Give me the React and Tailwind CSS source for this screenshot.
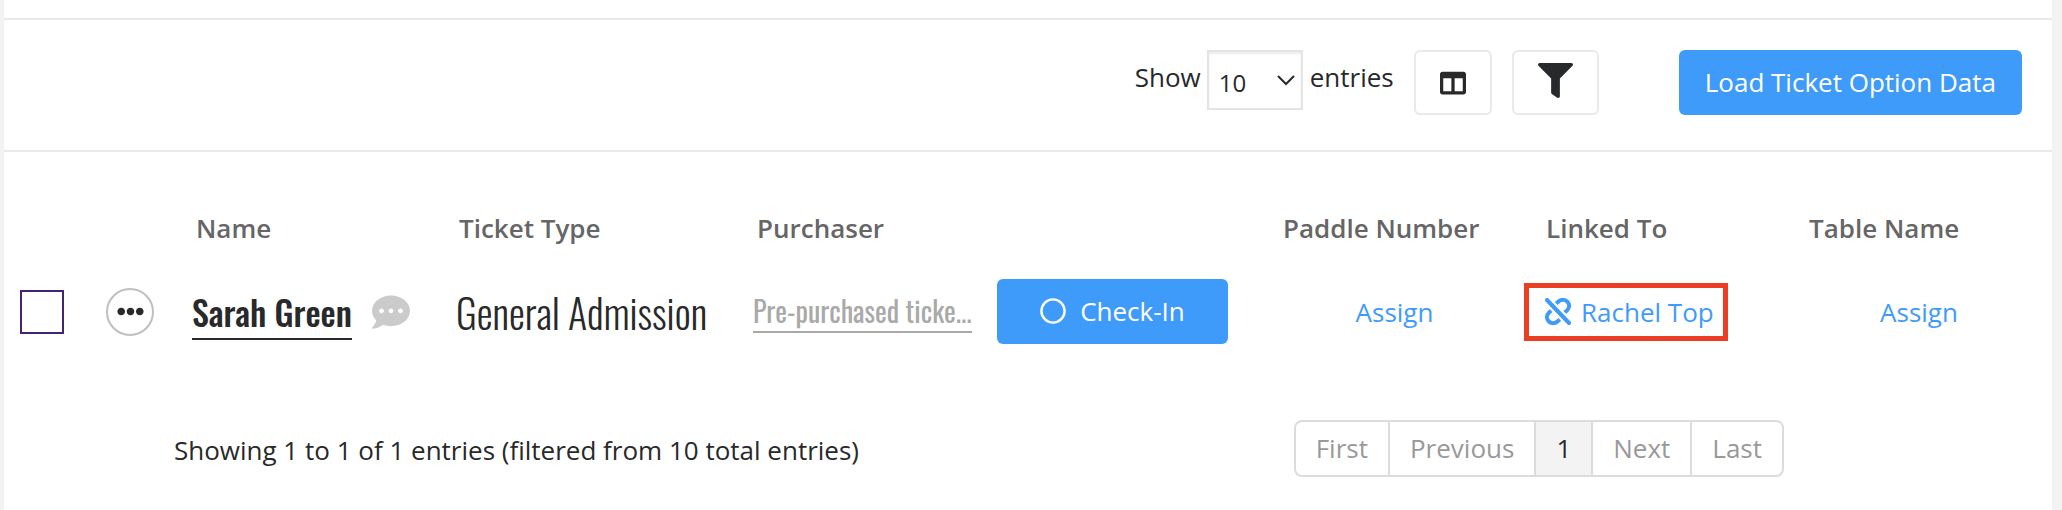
import React, { useState } from 'react';
import { FaColumns, FaFilter, FaCommentDots, FaEllipsisH } from 'react-icons/fa';

const tickets = [
  {
    id: 1,
    name: 'Sarah Green',
    type: 'General Admission',
    purchaser: 'Pre-purchased ticke...',
    linkedTo: 'Rachel Top',
  },
];

const UnlinkIcon = ({ className }) => (
  <svg className={className} viewBox="0 0 26 27" fill="none" stroke="currentColor" strokeWidth="4" aria-hidden="true">
    <path strokeLinecap="round" d="M2 2 L24 25" />
    <path d="M11.2 5.6 L13.2 3.8 C16 1.1 20.2 1.3 22.5 3.9 C24.8 6.6 24.4 10 22.2 12.2 L19.8 14.4" />
    <path d="M14.8 21.4 L12.8 23.2 C10 25.9 5.8 25.7 3.5 23.1 C1.2 20.4 1.6 17 3.8 14.8 L6.2 12.6" />
  </svg>
);

const Toolbar = () => {
  const [pageSize, setPageSize] = useState('10');

  return (
    <div className="flex items-start justify-end border-y-2 border-[#e9e9e9] pt-[30px] pr-[30px] pb-[35px]">
      <div className="mr-5 flex items-start">
        <label htmlFor="page-size" className="mr-[6px] pt-[9px]">Show</label>
        <div className="relative mr-[7px]">
          <select
            id="page-size"
            value={pageSize}
            onChange={(e) => setPageSize(e.target.value)}
            className="h-[60px] w-24 appearance-none border-2 border-[#e4e4e4] bg-white pt-[6px] pl-[10px] text-2xl shadow-[inset_0_2px_2px_rgba(0,0,0,0.08)]"
          >
            <option value="10">10</option>
            <option value="25">25</option>
            <option value="50">50</option>
          </select>
          <svg className="pointer-events-none absolute top-6 right-2 h-3 w-[18px]" viewBox="0 0 18 12" fill="none" stroke="currentColor" strokeWidth="2" aria-hidden="true">
            <path d="M1 2 L9 10 L17 2" />
          </svg>
        </div>
        <span className="pt-[9px]">entries</span>
      </div>
      <button aria-label="Columns" className="mr-5 flex h-[65px] w-[78px] items-center justify-center rounded-md border-2 border-[#e9e9e9]">
        <FaColumns className="size-[26px]" />
      </button>
      <button aria-label="Filter" className="mr-20 flex h-[65px] w-[87px] items-start justify-center rounded-md border-2 border-[#e9e9e9] pt-[11px]">
        <FaFilter className="size-[35px]" />
      </button>
      <button className="h-[65px] rounded-md bg-[#3f9bfa] px-[26px] pb-[2px] text-white">Load Ticket Option Data</button>
    </div>
  );
};

const TicketRow = ({ ticket }) => (
  <tr className="h-[65px]">
    <td className="pl-4">
      <input
        type="checkbox"
        aria-label={`Select ${ticket.name}`}
        className="block size-11 appearance-none border-2 border-[#44246f] bg-white"
      />
    </td>
    <td>
      <button aria-label="More actions" className="flex size-12 items-center justify-center rounded-full border-2 border-[#bfbfbf]">
        <FaEllipsisH className="size-[27px]" />
      </button>
    </td>
    <td>
      <div className="flex items-center gap-5">
        <a href="#ticket" className="border-b-2 border-[#28292a] pt-1 pb-[2px] font-[Oswald,sans-serif] text-[34px] leading-[48px] font-medium whitespace-nowrap">
          {ticket.name}
        </a>
        <FaCommentDots className="size-[38px] text-[#cbcbcb]" />
      </div>
    </td>
    <td className="font-[Oswald,sans-serif] text-[40px] leading-[48px] font-light whitespace-nowrap">
      {ticket.type}
    </td>
    <td>
      <a href="#purchaser" className="border-b-2 border-[#a9a9a9] font-[Oswald,sans-serif] text-[28px] whitespace-nowrap text-[#a9a9a9]">
        {ticket.purchaser}
      </a>
    </td>
    <td>
      <button className="flex h-[65px] w-[231px] items-center justify-center gap-[14px] rounded-md bg-[#3f9bfa] pb-[2px] text-white">
        <svg className="size-[26px]" viewBox="0 0 26 26" fill="none" stroke="currentColor" strokeWidth="2.4" aria-hidden="true">
          <circle cx="13" cy="13" r="11.6" />
        </svg>
        Check-In
      </button>
    </td>
    <td className="pr-8 text-center">
      <a href="#paddle" className="text-[#3f9bfa]">Assign</a>
    </td>
    <td className="pl-[3px]">
      <a href="#linked" className="relative flex w-fit items-center gap-[10px] text-[#3f9bfa]">
        <UnlinkIcon className="h-[27px] w-[26px]" />
        {ticket.linkedTo}
        <span className="pointer-events-none absolute -inset-y-[11px] right-[-14px] left-[-21px] border-[5px] border-[#eb3f24]" />
      </a>
    </td>
    <td className="pr-5 text-center">
      <a href="#table" className="text-[#3f9bfa]">Assign</a>
    </td>
  </tr>
);

const TicketTable = () => (
  <table className="mt-[58px] w-full table-fixed">
    <colgroup>
      <col className="w-[102px]" />
      <col className="w-[86px]" />
      <col className="w-[264px]" />
      <col className="w-[297px]" />
      <col className="w-[244px]" />
      <col className="w-[282px]" />
      <col className="w-[263px]" />
      <col className="w-[264px]" />
      <col />
    </colgroup>
    <thead>
      <tr className="h-[69px] text-left align-top text-[#666]">
        <td />
        <td />
        <th className="pl-1 font-semibold">Name</th>
        <th className="pl-[3px] font-semibold">Ticket Type</th>
        <th className="pl-1 font-semibold">Purchaser</th>
        <td />
        <th className="pl-1 font-semibold">Paddle Number</th>
        <th className="pl-1 font-semibold">Linked To</th>
        <th className="pl-[3px] font-semibold">Table Name</th>
      </tr>
    </thead>
    <tbody>
      {tickets.map((ticket) => (
        <TicketRow key={ticket.id} ticket={ticket} />
      ))}
    </tbody>
  </table>
);

const Pagination = () => (
  <nav aria-label="Pagination" className="flex divide-x-2 divide-[#dcdcdc] overflow-hidden rounded-lg border-2 border-[#dcdcdc] text-[#999]">
    <button className="h-[53px] px-5 pb-[2px]">First</button>
    <button className="h-[53px] px-5 pb-[2px]">Previous</button>
    <button aria-current="page" className="h-[53px] bg-[#f3f3f3] px-5 pb-[2px] text-[#28292a]">1</button>
    <button className="h-[53px] px-5 pb-[2px]">Next</button>
    <button className="h-[53px] px-5 pb-[2px]">Last</button>
  </nav>
);

export default function App() {
  return (
    <div className="min-h-screen bg-[#f3f3f3] pr-[10px] pl-1 font-['Open_Sans',sans-serif] text-[26px] leading-9 text-[#28292a]">
      <div className="min-h-screen bg-white pt-[18px]">
        <Toolbar />
        <TicketTable />
        <div className="mt-[76px] flex items-center justify-between pr-[268px] pl-[170px]">
          <p className="pt-[2px]">Showing 1 to 1 of 1 entries (filtered from 10 total entries)</p>
          <Pagination />
        </div>
      </div>
    </div>
  );
}
